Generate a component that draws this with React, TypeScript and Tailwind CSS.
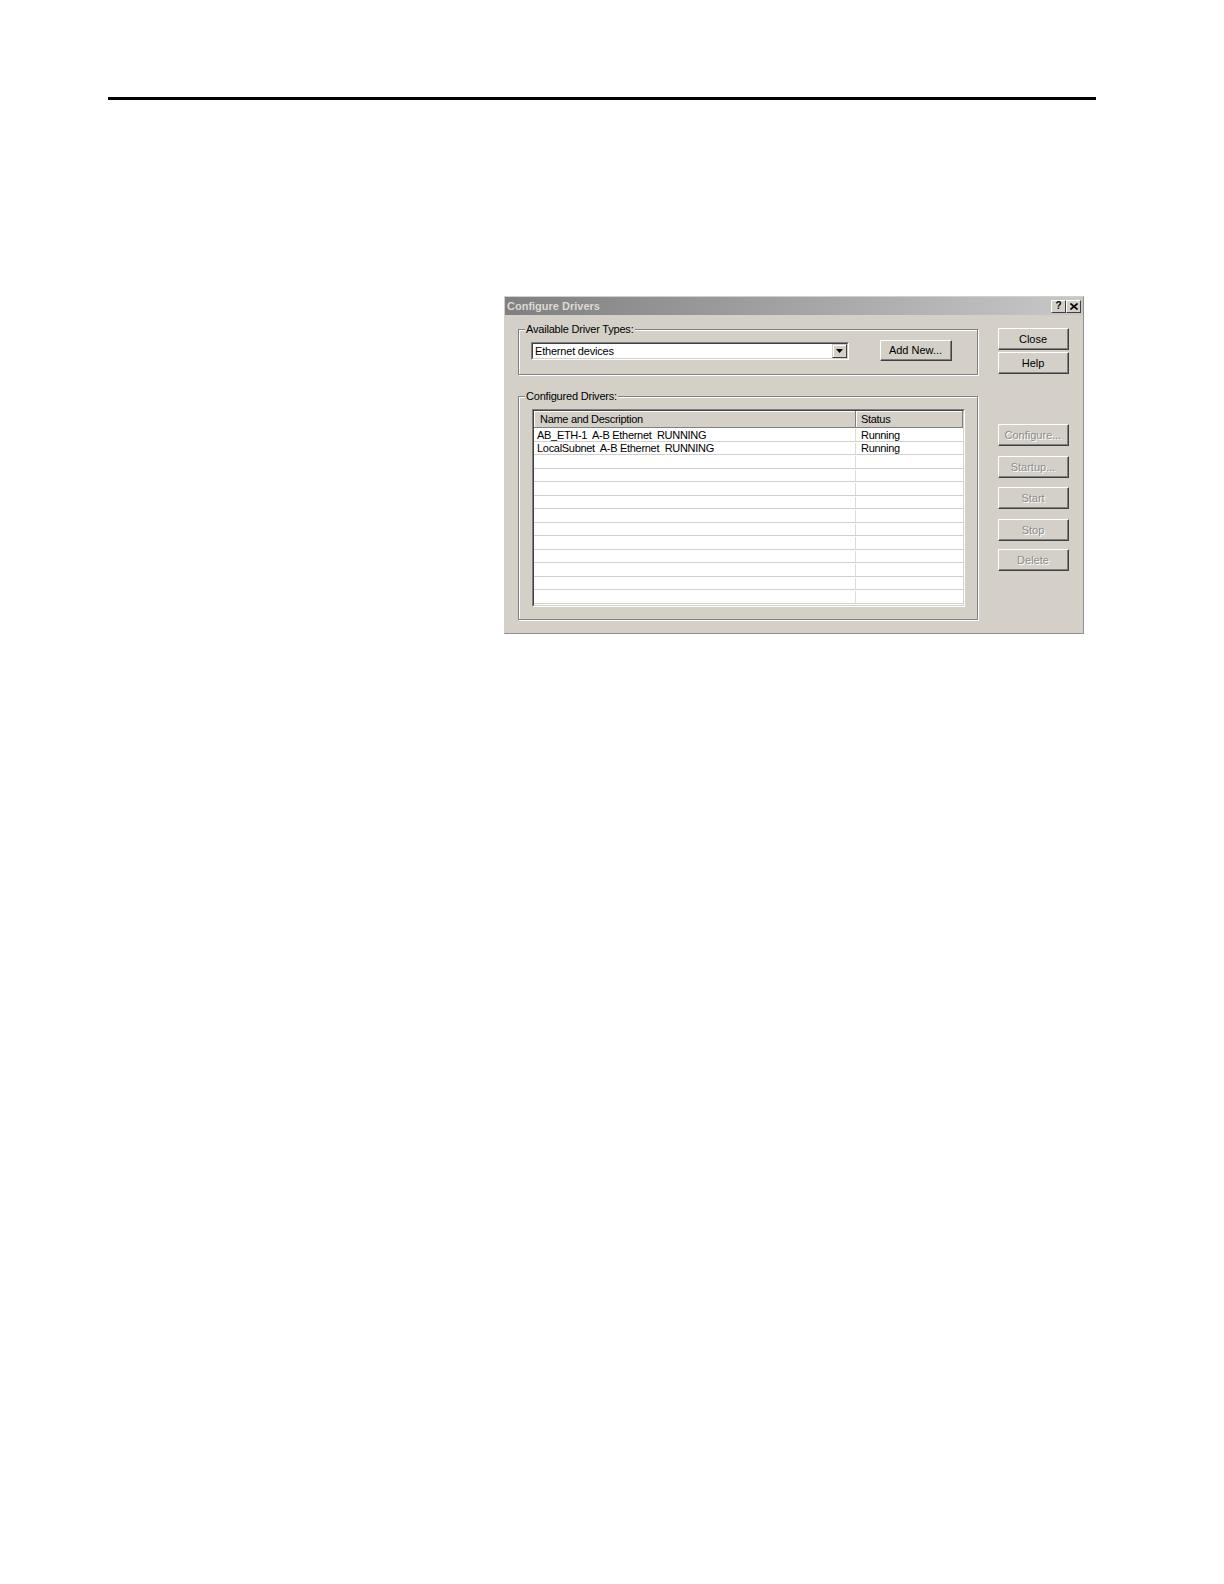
import React from "react";

type Row = { name: string; status: string };

const rows: Row[] = [
  { name: "AB_ETH-1  A-B Ethernet  RUNNING", status: "Running" },
  { name: "LocalSubnet  A-B Ethernet  RUNNING", status: "Running" },
  ...Array.from({ length: 11 }, () => ({ name: "", status: "" })),
];

// raised win2000 style push button
const Btn: React.FC<{ label: string; disabled?: boolean; className?: string }> = ({
  label,
  disabled,
  className,
}) => (
  <div
    className={
      "flex items-center justify-center border border-t-white border-l-white border-r-[#404040] border-b-[#404040] bg-[#d4d0c8] text-[11px] leading-none " +
      (disabled ? "text-[#8c8c8c] [text-shadow:1px_1px_0_#fff] " : "text-black ") +
      (className ?? "")
    }
  >
    <div className="flex h-full w-full items-center justify-center border-r border-b border-r-[#808080] border-b-[#808080] pt-[1px]">
      {label}
    </div>
  </div>
);

const Sunken: React.FC<{ className: string; children: React.ReactNode }> = ({ className, children }) => (
  <div className={"border border-t-[#808080] border-l-[#808080] border-r-white border-b-white " + className}>
    <div className="h-full w-full overflow-hidden border border-t-[#404040] border-l-[#404040] border-r-[#d4d0c8] border-b-[#d4d0c8] bg-white">
      {children}
    </div>
  </div>
);

const CaptionBtn: React.FC<{ children: React.ReactNode }> = ({ children }) => (
  <div className="flex h-[13px] w-[15px] items-center justify-center border border-t-white border-l-white border-r-[#404040] border-b-[#404040] bg-[#d4d0c8]">
    {children}
  </div>
);

export default function App() {
  return (
    <div className="min-h-[1584px] w-[1224px] bg-white pt-[97px] font-['Liberation_Sans',Arial,sans-serif] text-black">
      <div className="ml-[108px] h-[3px] w-[988px] bg-black" />

      <div className="ml-[504px] mt-[196px] flex h-[338px] w-[580px] flex-col border border-t-[#d4d0c8] border-l-[#d4d0c8] border-r-[#909090] border-b-[#909090] bg-[#d4d0c8]">
        {/* title bar */}
        <div className="flex h-[18px] items-center bg-linear-to-r from-[#808080] to-[#c8c8c8] pl-[2px] pr-[2px]">
          <span className="text-[11px] font-bold leading-none text-[#dcd9d2]">Configure Drivers</span>
          <div className="ml-auto flex">
            <CaptionBtn>
              <span className="text-[10px] font-bold leading-none">?</span>
            </CaptionBtn>
            <CaptionBtn>
              <svg width="8" height="7" viewBox="0 0 8 7">
                <path d="M0.5 0.5 L7.5 6.5 M7.5 0.5 L0.5 6.5" stroke="#000" strokeWidth="1.6" />
              </svg>
            </CaptionBtn>
          </div>
        </div>

        <div className="flex flex-1 pl-[13px]">
          <div className="w-[460px] pt-[8px]">
            <fieldset className="border border-[#808080] shadow-[1px_1px_0_#fff,inset_1px_1px_0_#fff]">
              <legend className="ml-[6px] bg-[#d4d0c8] px-[1px] text-[11px] leading-[13px] tracking-[-0.2px]">
                Available Driver Types:
              </legend>
              <div className="flex items-center pl-[12px] pt-[4px] pb-[13px]">
                <Sunken className="h-[18px] w-[318px]">
                  <div className="flex h-full items-center">
                    <span className="pl-[2px] pt-[1px] text-[11px] leading-none tracking-[-0.2px]">Ethernet devices</span>
                    <div className="ml-auto flex h-full w-[15px] items-center justify-center border border-t-[#d4d0c8] border-l-[#d4d0c8] border-r-[#404040] border-b-[#404040] bg-[#d4d0c8] shadow-[inset_1px_1px_0_#fff]">
                      <svg width="7" height="4" viewBox="0 0 7 4">
                        <path d="M0 0 H7 L3.5 4 Z" fill="#000" />
                      </svg>
                    </div>
                  </div>
                </Sunken>
                <Btn label="Add New..." className="ml-[31px] h-[21px] w-[72px]" />
              </div>
            </fieldset>

            <fieldset className="mt-[15px] border border-[#808080] shadow-[1px_1px_0_#fff,inset_1px_1px_0_#fff]">
              <legend className="ml-[6px] bg-[#d4d0c8] px-[1px] text-[11px] leading-[13px] tracking-[-0.2px]">
                Configured Drivers:
              </legend>
              <div className="pl-[13px] pt-[6px] pb-[12px]">
                <Sunken className="h-[198px] w-[433px]">
                  <div className="flex h-[17px] text-[11px] leading-none tracking-[-0.3px]">
                    <div className="flex w-[322px] items-center border-r border-b border-r-[#808080] border-b-[#808080] bg-[#d4d0c8] pl-[6px] pt-[1px] shadow-[inset_1px_1px_0_#fff]">
                      Name and Description
                    </div>
                    <div className="flex flex-1 items-center border-r border-b border-r-[#808080] border-b-[#808080] bg-[#d4d0c8] pl-[5px] pt-[1px] shadow-[inset_1px_1px_0_#fff]">
                      Status
                    </div>
                  </div>
                  {rows.map((r, i) => (
                    <div
                      key={i}
                      className={
                        i % 2 === 0
                          ? "flex h-[14px] border-b border-[#d0d0d0] pt-[1px] text-[11px] leading-none tracking-[-0.3px]"
                          : "flex h-[13px] border-b border-[#d0d0d0] pt-[1px] text-[11px] leading-none tracking-[-0.3px]"
                      }
                    >
                      <div className="flex w-[322px] items-center whitespace-pre border-r border-[#dcdcdc] pl-[3px]">
                        {r.name}
                      </div>
                      <div className="flex flex-1 items-center pl-[5px]">{r.status}</div>
                    </div>
                  ))}
                </Sunken>
              </div>
            </fieldset>
          </div>

          <div className="ml-[20px] flex w-[71px] flex-col pt-[13px]">
            <Btn label="Close" className="h-[22px] w-[71px]" />
            <Btn label="Help" className="mt-[2px] h-[22px] w-[71px]" />
            <Btn label="Configure..." disabled className="mt-[50px] h-[22px] w-[71px]" />
            <Btn label="Startup..." disabled className="mt-[10px] h-[22px] w-[71px]" />
            <Btn label="Start" disabled className="mt-[9px] h-[22px] w-[71px]" />
            <Btn label="Stop" disabled className="mt-[10px] h-[22px] w-[71px]" />
            <Btn label="Delete" disabled className="mt-[8px] h-[22px] w-[71px]" />
          </div>
        </div>
      </div>
    </div>
  );
}
